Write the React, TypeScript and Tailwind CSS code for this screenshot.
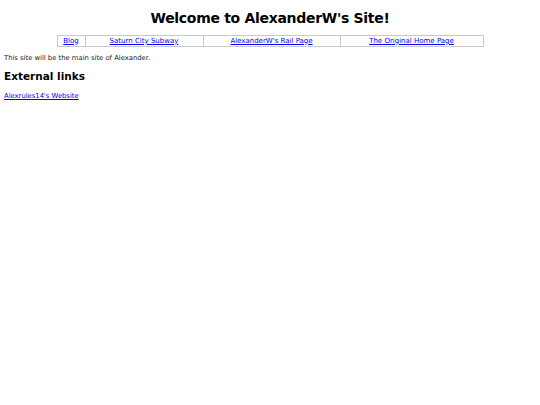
export default function App() {
  const links = [
    { label: 'Blog', w: 'w-[28px]' },
    { label: 'Saturn City Subway', w: 'w-[118px]' },
    { label: "AlexanderW's Rail Page", w: 'w-[137px]' },
    { label: 'The Original Home Page', w: '' },
  ]
  return (
    <div className="min-h-[405px] bg-white text-black px-[4px]" style={{ fontFamily: '"DejaVu Sans", Verdana, sans-serif' }}>
      <h1 className="pt-[9px] text-center text-[14px] font-bold leading-[18px] tracking-[-0.3px]">Welcome to AlexanderW's Site!</h1>
      <table className="mx-auto mt-[8px] w-[427px] border border-[#c8c8c8] border-collapse text-[7px]">
        <tbody>
          <tr>
            {links.map((l) => (
              <td key={l.label} className={`${l.w} border border-[#c8c8c8] text-center h-[11px] leading-[9px]`}>
                <a href="#" className="text-[#0000ee] underline">{l.label}</a>
              </td>
            ))}
          </tr>
        </tbody>
      </table>
      <p className="mt-[7px] text-[6.8px] leading-[9px] text-[#222]">This site will be the main site of Alexander.</p>
      <h2 className="mt-[7px] text-[10.5px] font-bold leading-[13px]">External links</h2>
      <p className="mt-[9px] text-[6.8px] leading-[9px]">
        <a href="#" className="text-[#0000ee] underline">Alexrules14's Website</a>
      </p>
    </div>
  )
}
